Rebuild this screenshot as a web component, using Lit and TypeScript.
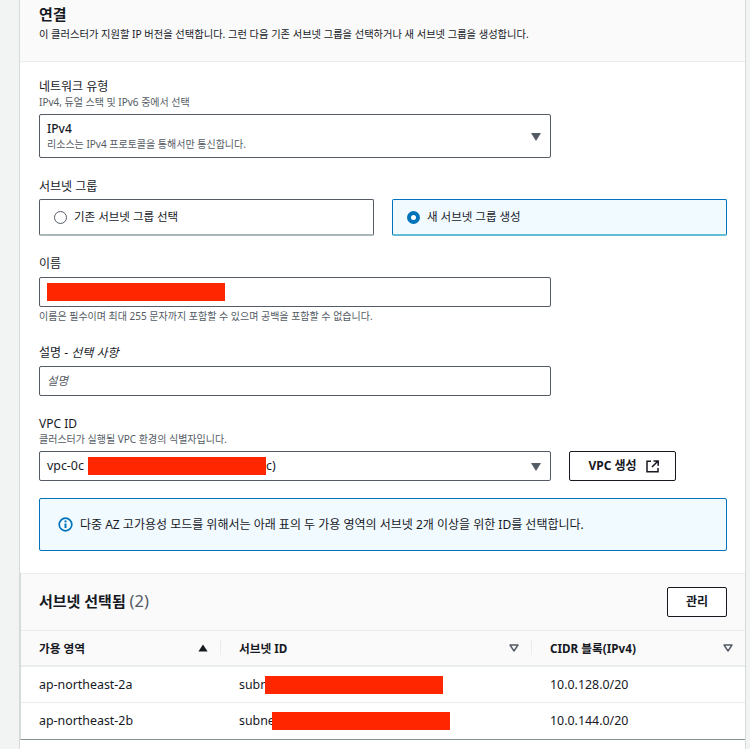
import { LitElement, html, css } from "lit";
import { customElement } from "lit/decorators.js";

const caret = html`<svg class="caret" width="12" height="10" viewBox="0 0 12 10"><path d="M1 1h10L6 9z" fill="#545b64"/></svg>`;
const sortDown = html`<svg class="sort" width="10" height="8" viewBox="0 0 10 8"><path d="M1 1h8L5 7z" fill="none" stroke="#545b64" stroke-width="1.4" stroke-linejoin="round"/></svg>`;
const sortUp = html`<svg class="sort" width="10" height="8" viewBox="0 0 10 8"><path d="M5 0.5L9.6 7.5H.4z" fill="#16191f"/></svg>`;

@customElement("app-root")
export class AppRoot extends LitElement {
  static styles = css`
    :host { display: block; height: 749px; overflow: hidden; background: #f2f3f3; font-family: "Noto Sans", "Noto Sans CJK KR", sans-serif; color: #16191f; font-size: 12px; line-height: 16px; }
    * { box-sizing: border-box; }
    .card { margin: 0 5px 0 20px; width: 725px; height: 749px; background: #fff; box-shadow: 0 0 0 1px #d5dbdb; display: flex; flex-direction: column; }
    .head { height: 62px; padding: 4px 19px 0; background: #fafafa; border-bottom: 1px solid #eaeded; }
    .head h2 { margin: 0; font-size: 15px; line-height: 20px; font-weight: 700; }
    .head p { margin: 2px 0 0; font-size: 10.27px; line-height: 16px; }
    .body { padding: 17px 18px 0 19px; display: flex; flex-direction: column; }
    .label { font-size: 12px; line-height: 16px; height: 16px; }
    .mt21 { margin-top: 21px; }
    .mt20 { margin-top: 20px; }
    .mt22 { margin-top: 22px; }
    .mt2 { margin-top: 2px; }
    .hint { font-size: 10px; line-height: 14px; color: #545b64; }
    .field { width: 512px; border: 1px solid #545b64; border-radius: 2px; background: #fff; display: flex; align-items: center; padding: 0 8px 0 7px; }
    .grow { flex: 1; min-width: 0; }
    .net { height: 44px; margin-top: 5px; }
    .net b { display: block; font-size: 12px; font-weight: 500; line-height: 16px; }
    .net small { display: block; font-size: 10px; line-height: 14px; color: #545b64; }
    .caret { margin-right: 0; flex: none; position: relative; top: 1px; }
    .radios { display: flex; gap: 18px; margin-top: 4px; width: 688px; }
    .radio { flex: 1; height: 37px; border: 1px solid #545b64; border-bottom: 2px solid #aab7b8; border-radius: 2px; display: flex; align-items: center; gap: 7px; padding: 0 14px; font-size: 11.5px; }
    .radio.on { background: #f1faff; border: 1px solid #0073bb; border-bottom: 2px solid #61bdd6; }
    .dot { width: 13px; height: 13px; border-radius: 50%; border: 1px solid #545b64; background: #fff; flex: none; }
    .on .dot { border: 4px solid #0073bb; }
    .text { height: 30px; margin-top: 5px; }
    .italic { font-style: italic; color: #545b64; font-size: 11.5px; }
    .red { background: #ff2600; height: 18px; flex: none; width: 178px; }
    .row { display: flex; gap: 18px; margin-top: 5px; }
    .vpc { height: 30px; font-size: 12.4px; white-space: nowrap; }
    .val { flex: none; width: 41px; }
    .btn { border: 1px solid #16191f; border-radius: 2px; height: 30px; display: flex; align-items: center; justify-content: center; font-size: 12px; font-weight: 700; color: #16191f; background: #fff; }
    .vpcbtn { width: 107px; gap: 9px; padding-left: 2px; }
    .alert { margin-top: 17px; width: 688px; height: 53px; background: #f1faff; border: 1px solid #0073bb; border-radius: 2px; display: flex; align-items: center; gap: 7px; padding: 0 18px; font-size: 12px; white-space: nowrap; }
    .table { margin-top: 22px; height: 167px; border-bottom: 1px solid #879596; border-left: 1px solid #d5dbdb; }
    .thead { height: 58px; background: #fafafa; display: flex; align-items: center; justify-content: space-between; padding: 0 18px; border-top: 1px solid #eaeded; border-bottom: 1px solid #eaeded; }
    .thead h3 { margin: -3px 0 0; font-size: 15px; font-weight: 700; line-height: 20px; }
    .thead h3 span { font-weight: 400; font-size: 16.5px; color: #545b64; }
    .manage { width: 60px; }
    .grid { display: grid; grid-template-columns: 199px 311px 214px; }
    .th, .td { display: flex; align-items: center; padding-left: 18px; height: 36px; border-bottom: 1px solid #eaeded; font-size: 12.4px; white-space: nowrap; }
    .th { background: #fafafa; font-weight: 700; font-size: 11.7px; border-bottom: 2px solid #eaeded; justify-content: space-between; padding-right: 12px; position: relative; }
    .th.mid, .td.mid, .th.last, .td.last { padding-left: 19px; }
    .th:not(:first-child)::before { content: ""; position: absolute; left: 0; top: 9px; bottom: 10px; width: 1px; background: #eaeded; }
    .td:nth-last-child(-n+3) { border-bottom: none; }
    .sub { display: flex; align-items: center; }
    .sub1 { width: 26px; }
    .sub2 { width: 33px; }
  `;

  render() {
    return html`<div class="card">
      <div class="head">
        <h2>연결</h2>
        <p>이 클러스터가 지원할 IP 버전을 선택합니다. 그런 다음 기존 서브넷 그룹을 선택하거나 새 서브넷 그룹을 생성합니다.</p>
      </div>
      <div class="body">
        <div class="label">네트워크 유형</div>
        <div class="hint">IPv4, 듀얼 스택 및 IPv6 중에서 선택</div>
        <div class="field net"><div class="grow"><b>IPv4</b><small>리소스는 IPv4 프로토콜을 통해서만 통신합니다.</small></div>${caret}</div>
        <div class="label mt21">서브넷 그룹</div>
        <div class="radios">
          <div class="radio"><span class="dot"></span>기존 서브넷 그룹 선택</div>
          <div class="radio on"><span class="dot"></span>새 서브넷 그룹 생성</div>
        </div>
        <div class="label mt20">이름</div>
        <div class="field text"><div class="red"></div></div>
        <div class="hint mt2">이름은 필수이며 최대 255 문자까지 포함할 수 있으며 공백을 포함할 수 없습니다.</div>
        <div class="label mt22">설명 - <i>선택 사항</i></div>
        <div class="field text"><span class="italic">설명</span></div>
        <div class="label mt20">VPC ID</div>
        <div class="hint">클러스터가 실행될 VPC 환경의 식별자입니다.</div>
        <div class="row">
          <div class="field vpc"><span class="val">vpc-0c</span><div class="red"></div><span class="grow">c)</span>${caret}</div>
          <div class="btn vpcbtn">VPC 생성
            <svg width="13" height="13" viewBox="0 0 13 13" fill="none" stroke="#16191f" stroke-width="1.5"><path d="M5 1.2H1v10.6h11V8M7.5 1h4.7v4.7M12 1L6 7"/></svg>
          </div>
        </div>
        <div class="alert">
          <svg width="15" height="15" viewBox="0 0 15 15"><circle cx="7.5" cy="7.5" r="6.3" fill="none" stroke="#0073bb" stroke-width="1.7"/><path d="M7.5 6.5v4.5" stroke="#0073bb" stroke-width="2"/><circle cx="7.5" cy="4.4" r="1.1" fill="#0073bb"/></svg>
          다중 AZ 고가용성 모드를 위해서는 아래 표의 두 가용 영역의 서브넷 2개 이상을 위한 ID를 선택합니다.
        </div>
      </div>
      <div class="table">
        <div class="thead"><h3>서브넷 선택됨 <span>(2)</span></h3><div class="btn manage">관리</div></div>
        <div class="grid">
          <div class="th">가용 영역 ${sortUp}</div>
          <div class="th mid">서브넷 ID ${sortDown}</div>
          <div class="th last">CIDR 블록(IPv4) ${sortDown}</div>
          <div class="td">ap-northeast-2a</div>
          <div class="td mid"><span class="sub"><span class="sub1">subn</span><span class="red"></span></span></div>
          <div class="td last">10.0.128.0/20</div>
          <div class="td">ap-northeast-2b</div>
          <div class="td mid"><span class="sub"><span class="sub2">subne</span><span class="red"></span></span></div>
          <div class="td last">10.0.144.0/20</div>
        </div>
      </div>
    </div>`;
  }
}
